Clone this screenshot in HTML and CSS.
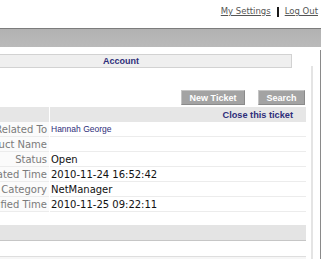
FILE: index.html
```html
<!DOCTYPE html>
<html lang="en">
<head>
    <meta charset="UTF-8">
    <title>Ticket Details</title>
    <link rel="stylesheet" href="styles.css">
</head>
<body>
<div class="top-links">
    <a href="#">My Settings</a>
    <span class="sep"></span>
    <a href="#">Log Out</a>
</div>
<div class="head-bar"></div>
<div class="main">
    <div class="content">
        <div class="tab">Account</div>
        <div class="actions">
            <button type="button" class="btn">New Ticket</button>
            <button type="button" class="btn btn-search">Search</button>
        </div>
        <div class="ticket">
            <div class="ticket-head"></div>
            <div class="ticket-head ticket-head-main"><a href="#">Close this ticket</a></div>

            <div class="label">Related To</div>
            <div class="value"><a href="#" class="person">Hannah George</a></div>

            <div class="label">Product Name</div>
            <div class="value"></div>

            <div class="label">Status</div>
            <div class="value">Open</div>

            <div class="label">Created Time</div>
            <div class="value">2010-11-24 16:52:42</div>

            <div class="label">Category</div>
            <div class="value">NetManager</div>

            <div class="label">Modified Time</div>
            <div class="value">2010-11-25 09:22:11</div>
        </div>
        <div class="section-bar"></div>
        <div class="section-next"></div>
    </div>
    <div class="side"></div>
</div>
</body>
</html>
```

FILE: styles.css
```css
:root {
    --navy: #2e2e7a;
    --label: #7a7a7a;
    --line: #ececec;
}
html, body {
    margin: 0;
    padding: 0;
    overflow: hidden;
}
body {
    width: 321px;
    height: 259px;
    background-color: #ffffff;
    font-family: "DejaVu Sans", Verdana, sans-serif;
    font-size: 10px;
    color: #111111;
}
.top-links {
    height: 28px;
    display: flex;
    justify-content: flex-end;
    align-items: flex-start;
    gap: 6px;
    padding: 6px 3px 0 0;
    box-sizing: border-box;
    font-size: 8.5px;
    line-height: 11px;
}
.top-links a {
    color: #555555;
}
.top-links .sep {
    width: 2px;
    height: 10px;
    margin-top: 1px;
    background-color: #1a1a1a;
}
.head-bar {
    height: 19px;
    border-top: 1px solid #7c7c7c;
    background: linear-gradient(#b2b2b2, #bababa);
    box-sizing: border-box;
}
.main {
    display: flex;
    margin-top: 3px;
    height: 209px;
    border-right: 1px solid #8a8a8a;
}
.content {
    width: 311px;
    flex: none;
}
.side {
    flex: 1;
    margin-top: 16px;
    border-left: 2px solid #e4e4e4;
}
.tab {
    width: 292px;
    height: 14px;
    margin-top: 4px;
    box-sizing: border-box;
    padding-left: 103px;
    background-color: #efefef;
    border: 1px solid #d2d2d2;
    border-left: none;
    font-family: "Liberation Sans", Arial, sans-serif;
    font-weight: bold;
    font-size: 9px;
    line-height: 12px;
    color: var(--navy);
}
.actions {
    width: 306px;
    display: flex;
    justify-content: flex-end;
    gap: 13px;
    padding: 22px 1px 0 0;
    box-sizing: border-box;
}
.btn {
    height: 15px;
    width: 64px;
    padding: 0;
    border: 1px solid;
    border-color: #c4c4c4 #8a8a8a #8a8a8a #c4c4c4;
    background-color: #a3a3a3;
    color: #ffffff;
    font-family: "Liberation Sans", Arial, sans-serif;
    font-weight: bold;
    font-size: 9px;
}
.btn-search {
    width: 47px;
}
.ticket {
    width: 306px;
    margin-top: 2px;
    display: grid;
    grid-template-columns: 49px 1fr;
    column-gap: 1px;
}
.ticket-head {
    height: 15px;
    background-color: #e6e6e6;
}
.ticket-head-main {
    display: flex;
    justify-content: flex-end;
    align-items: center;
    padding-right: 13px;
}
.ticket-head-main a {
    color: var(--navy);
    text-decoration: none;
    font-family: "Liberation Sans", Arial, sans-serif;
    font-weight: bold;
    font-size: 9.2px;
}
.label, .value {
    height: 15px;
    display: flex;
    align-items: center;
    white-space: nowrap;
    border-bottom: 1px solid var(--line);
    box-sizing: border-box;
}
.label {
    justify-content: flex-end;
    padding-right: 2px;
    color: var(--label);
    background-color: #fbfbfb;
}
.value {
    padding-left: 1px;
}
.person {
    color: var(--navy);
    text-decoration: none;
    font-family: "Liberation Sans", Arial, sans-serif;
    font-size: 8.5px;
}
.section-bar {
    width: 306px;
    height: 16px;
    margin-top: 13px;
    background-color: #e4e4e4;
    border-bottom: 1px solid #c6c6c6;
    box-sizing: border-box;
}
.section-next {
    width: 306px;
    height: 10px;
    margin-top: 15px;
    border-top: 1px solid #dedede;
    background-color: #f6f6f6;
}
```
